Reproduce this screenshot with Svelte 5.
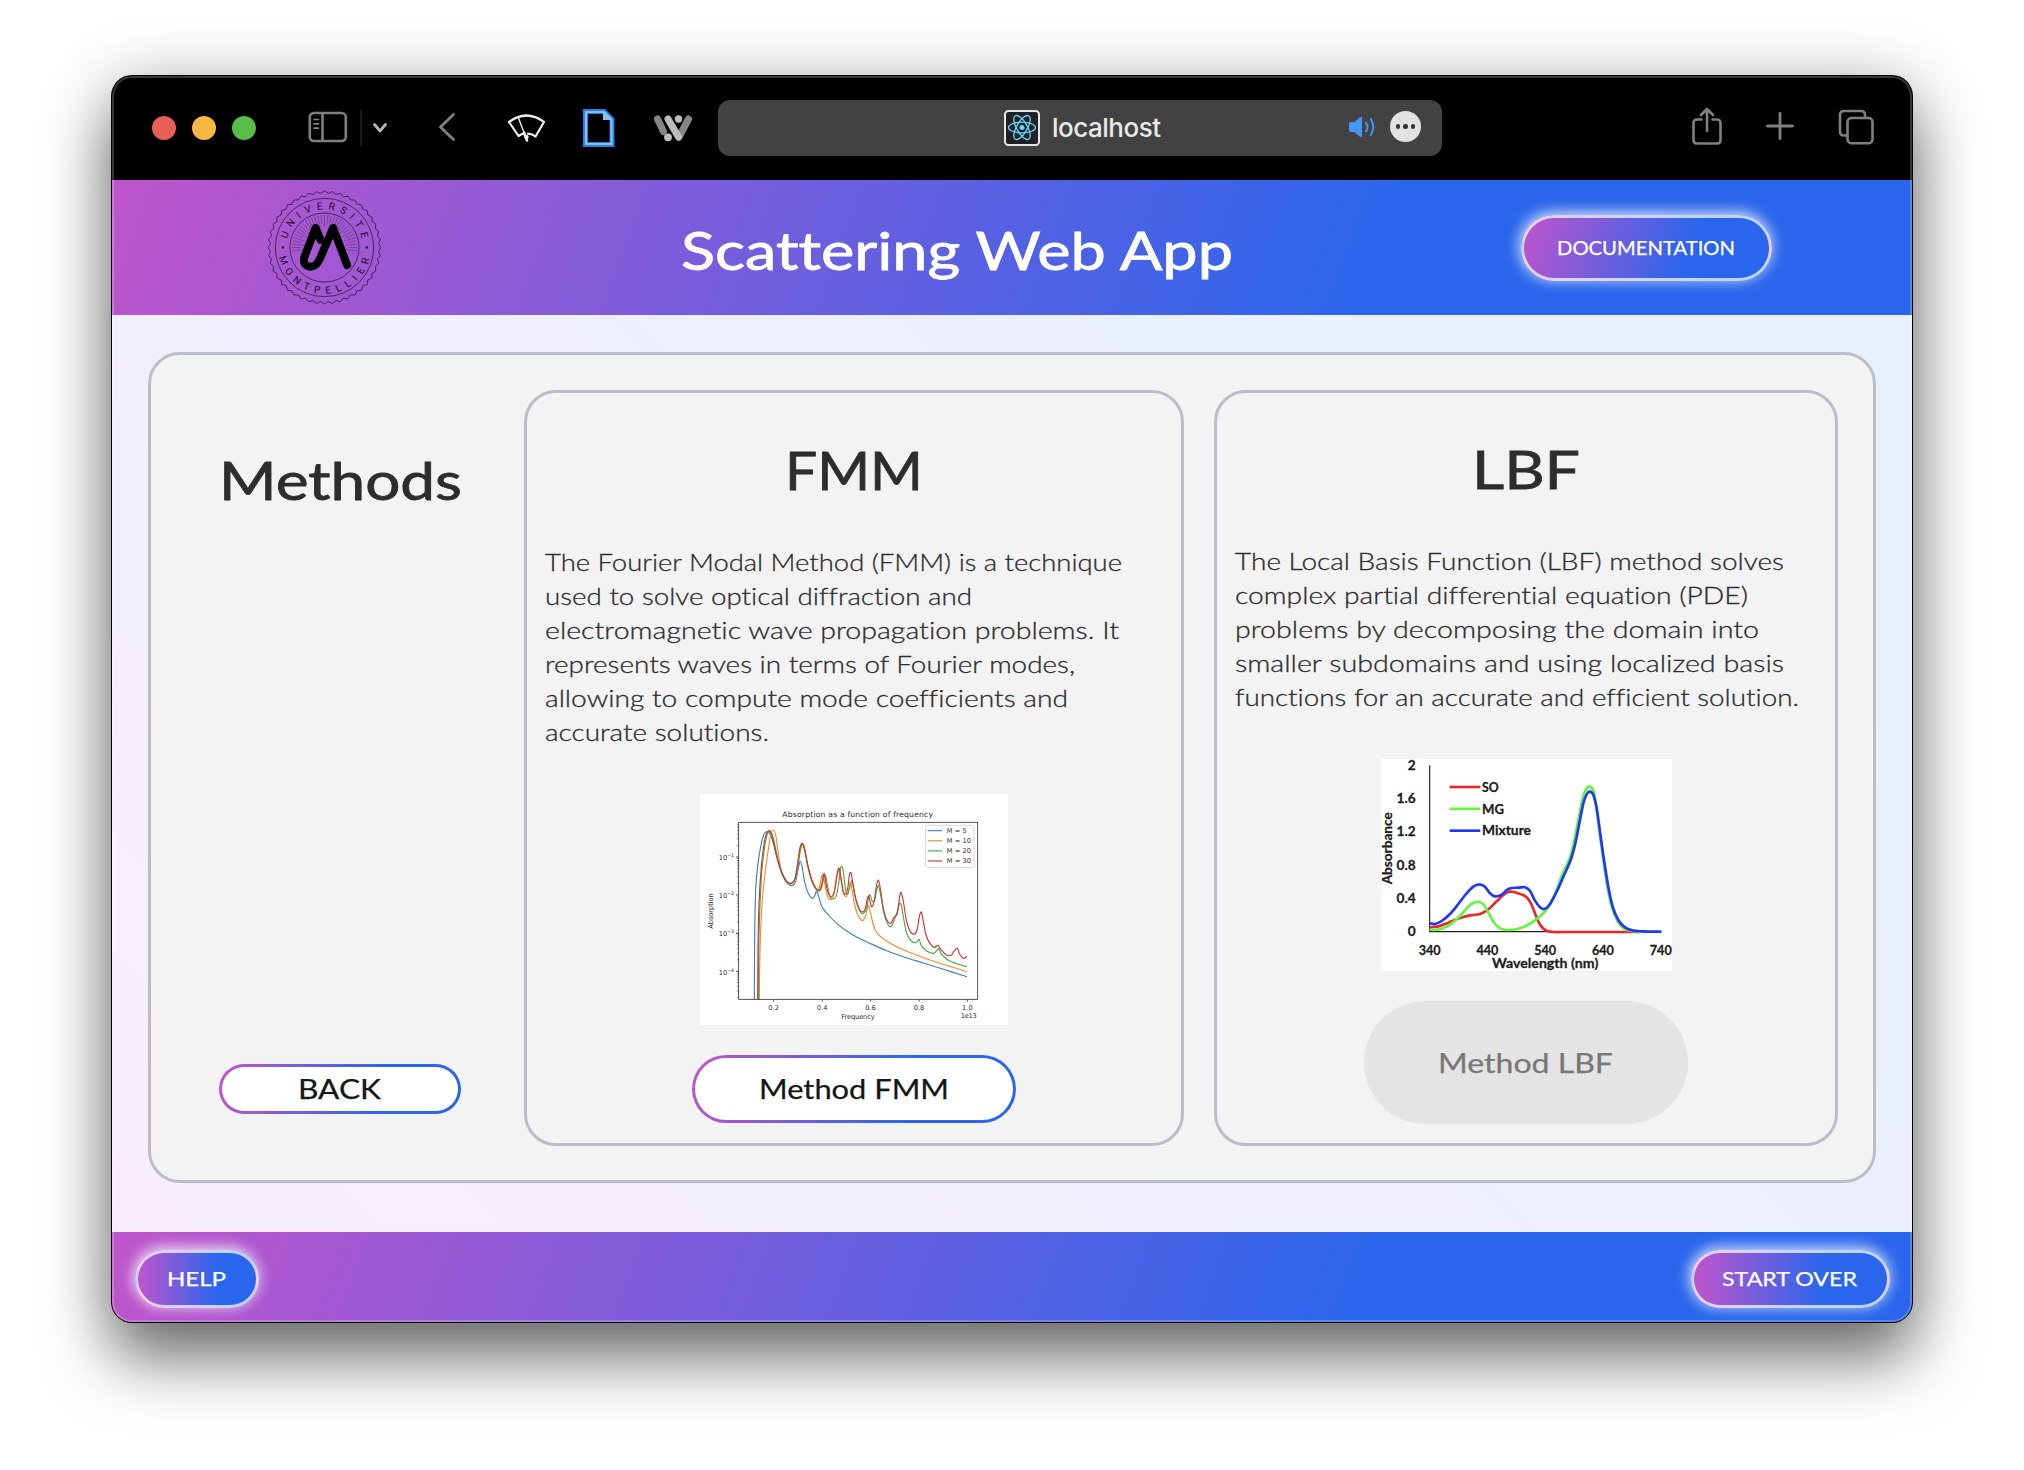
<script>
  // Catmull-Rom spline through a flat list of x,y pairs.
  function curve(points) {
    const p = points.trim().split(/\s+/).map((s) => s.split(',').map(Number));
    let d = `M${p[0]}`;
    for (let i = 0; i < p.length - 1; i++) {
      const a = p[i - 1] ?? p[i];
      const b = p[i];
      const c = p[i + 1];
      const e = p[i + 2] ?? c;
      d += `C${b[0] + (c[0] - a[0]) / 6},${b[1] + (c[1] - a[1]) / 6} ${c[0] - (e[0] - b[0]) / 6},${c[1] - (e[1] - b[1]) / 6} ${c}`;
    }
    return d;
  }

  const fmmText = [
    ['The Fourier Modal Method (FMM) is a technique', 577],
    ['used to solve optical diffraction and', 427],
    ['electromagnetic wave propagation problems. It', 574],
    ['represents waves in terms of Fourier modes,', 530],
    ['allowing to compute mode coefficients and', 523],
    ['accurate solutions.', 224],
  ];
  const lbfText = [
    ['The Local Basis Function (LBF) method solves', 549],
    ['complex partial differential equation (PDE)', 513],
    ['problems by decomposing the domain into', 524],
    ['smaller subdomains and using localized basis', 549],
    ['functions for an accurate and efficient solution.', 564],
  ];

  const absorption = [
    { name: 'M = 5', color: '#3f7fbc', d: curve('193,658 194,480 197,330 204,250 214,190 222,162 231,155 240,162 250,190 262,235 275,280 290,308 306,317 317,305 325,265 331,243 337,265 345,310 355,340 367,355 375,345 380,333 386,350 396,380 415,405 440,430 470,453 500,471 542,491 590,512 640,530 700,549 760,568 831,590') },
    { name: 'M = 10', color: '#f58a2c', d: curve('208,658 209,560 212,450 217,360 225,280 234,215 242,163 250,150 257,165 265,220 274,272 288,300 302,309 314,300 323,260 330,215 337,192 344,210 352,255 364,300 376,325 384,330 390,315 395,288 401,292 407,325 413,350 421,359 430,350 438,310 445,270 452,295 459,335 468,351 475,335 481,308 487,335 494,375 505,408 517,422 525,412 531,390 536,376 542,400 550,435 562,460 585,480 620,500 687,528 750,550 831,575') },
    { name: 'M = 20', color: '#4aa843', d: curve('206,658 206,520 209,400 215,280 224,200 232,162 241,153 250,175 262,230 275,275 290,303 303,311 316,296 325,250 332,205 339,192 346,215 354,260 367,305 385,333 395,322 402,292 407,288 413,320 420,350 428,357 438,350 446,310 451,270 455,259 460,275 466,325 473,343 480,320 486,302 492,335 502,375 512,397 520,400 530,385 535,355 540,344 547,364 554,360 559,335 565,317 572,345 582,400 593,432 602,440 611,425 620,400 627,375 633,372 640,410 650,460 664,483 678,488 687,478 694,497 710,513 730,520 740,512 746,506 755,523 775,541 800,551 831,560') },
    { name: 'M = 30', color: '#c93537', d: curve('203,658 204,500 207,370 214,260 223,185 230,160 238,153 247,170 260,230 274,275 288,303 302,311 315,295 324,240 330,203 337,190 344,210 354,258 367,303 384,331 394,318 400,285 404,284 409,318 416,342 424,350 433,335 440,290 446,264 452,285 459,330 467,343 474,320 478,285 483,278 488,305 497,355 508,388 517,396 525,388 531,360 536,348 541,368 546,380 553,362 559,320 565,300 571,325 580,385 591,421 602,430 612,412 622,400 629,350 634,338 641,370 650,425 661,455 673,462 682,447 688,410 694,396 700,425 708,465 720,490 733,502 744,496 753,509 768,524 784,526 793,512 802,505 809,523 818,534 824,534 831,529') },
  ];

  const absorbance = [
    { name: 'SO', color: '#e8282b', w: 50, d: curve('209,562 235,559 265,548 300,534 330,526 360,522 385,508 410,484 435,461 450,455 465,457 495,468 510,485 522,512 535,545 548,564 562,573 580,576 620,576 840,576') },
    { name: 'MG', color: '#62f53c', w: 66, d: curve('209,568 225,570 250,564 275,550 300,528 322,503 340,489 357,486 372,495 388,523 405,552 425,567 445,570 475,566 505,554 535,533 560,508 575,485 590,450 605,408 629,355 643,300 655,240 667,180 677,150 689,140 700,152 708,195 718,275 730,360 742,440 756,502 773,544 793,566 820,574 860,576') },
    { name: 'Mixture', color: '#2138f0', w: 147, d: curve('209,550 225,552 245,543 270,522 295,492 318,462 340,440 358,433 375,440 390,460 405,469 425,464 440,450 455,444 475,443 495,442 510,453 525,482 540,502 552,507 568,495 590,455 610,410 632,360 646,310 658,250 670,190 680,163 690,155 700,165 710,205 720,275 732,360 745,440 758,500 775,540 795,562 820,572 850,574 904,575') },
  ];

  // Minor ticks of the log axis: decades are 114.5 units apart.
  const minorTicks = [117, 231, 345, 460, 574, 688]
    .flatMap((y) => [2, 3, 4, 5, 6, 7, 8, 9].map((k) => y - Math.log10(k) * 114.5))
    .filter((y) => y > 128 && y < 658);

  const polar = (r, t) => [252 + r * Math.cos(t), 218 + r * Math.sin(t)].map((v) => v.toFixed(1));
  const seal = 'M' + Array.from({ length: 88 }, (_, i) => polar(i % 2 ? 163 : 170, (i * Math.PI) / 44)).join('L') + 'Z';
  const rays = Array.from({ length: 33 }, (_, i) => {
    const t = Math.PI * (1 + (i - 1) / 30);
    return `M${polar(i % 2 ? 72 : 62, t)}L${polar(98, t)}`;
  }).join('');
</script>

{#snippet label(text, width, cap, kind = '')}
  <svg class="label {kind}" {width} height={cap}>
    <text x="0" y={cap} font-size={cap / 0.717} textLength={width} lengthAdjust="spacingAndGlyphs">{text}</text>
  </svg>
{/snippet}

<div class="desktop">
  <div class="window">
    <div class="toolbar">
      <div class="lights"><i class="red"></i><i class="yellow"></i><i class="green"></i></div>

      <svg class="sidebar" width="40" height="32" viewBox="0 0 40 32">
        <g fill="none" stroke="#808080" stroke-width="2.6">
          <rect x="1.8" y="2" width="36" height="28" rx="4" /><path d="M14.5 2v28" />
          <path d="M6 8.5h4.5M6 12.8h4.5M6 17.2h4.5" stroke-width="1.7" stroke-linecap="round" />
        </g>
      </svg>
      <span class="divider"></span>
      <svg class="chevron" width="16" height="12" viewBox="0 0 16 12">
        <path d="M2.5 2.5 8 9l5.500-6.500" fill="none" stroke="#b4b4b4" stroke-width="2.800" stroke-linecap="round" stroke-linejoin="round" />
      </svg>
      <svg class="back" width="18" height="30" viewBox="0 0 18 30">
        <path d="M15.500 2.500 2.500 15l13 12.500" fill="none" stroke="#808080" stroke-width="2.800" stroke-linecap="round" stroke-linejoin="round" />
      </svg>
      <svg class="wiper" width="40" height="30" viewBox="0 0 40 30">
        <g fill="none" stroke="#f0f0f0" stroke-width="2.200" stroke-linejoin="round" stroke-linecap="round">
          <path d="M2 9Q19.500-4 37 9l-8.500 14.500q-3-2.500-7.500-2.800M2 9l9.500 14q2.500-1.800 5-2.300" />
          <path d="M11.500 5 19 25" stroke-width="1.400" /><path d="M17 19.500 20 27.500" stroke-width="2.600" />
        </g>
        <circle cx="19.500" cy="24" r="2.200" fill="#f0f0f0" />
      </svg>
      <svg class="doc" width="32" height="38" viewBox="0 0 32 38">
        <path d="M2.500 2.500h18.500l8 8V35.500H2.500Z" fill="none" stroke="#2b7de0" stroke-width="5" />
        <path d="M3 3h18l7.500 7.500V35H3Z" fill="none" stroke="#7fc4ff" stroke-width="2.200" />
        <path d="M20 3v8h9Z" fill="#7fc4ff" />
      </svg>
      <svg class="wlogo" width="40" height="28" viewBox="0 0 40 28">
        <g stroke-width="7" stroke-linecap="round">
          <path d="M4.500 5l6 12.500" stroke="#868686" /><path d="M35.500 5 26 23" stroke="#868686" />
          <path d="M15 5l10.500 18" stroke="#bdbdbd" />
        </g>
        <circle cx="15" cy="23.300" r="3.900" fill="#bdbdbd" /><circle cx="25.500" cy="5" r="3.700" fill="#bdbdbd" />
      </svg>

      <div class="address">
        <svg class="react" width="36" height="36" viewBox="0 0 36 36">
          <rect x="1" y="1" width="34" height="34" rx="3.500" fill="#202124" stroke="#e6e6e6" stroke-width="2" />
          <g fill="none" stroke="#61dafb" stroke-width="1.300">
            <ellipse cx="18" cy="17.500" rx="13.500" ry="5.300" />
            <ellipse cx="18" cy="17.500" rx="13.500" ry="5.300" transform="rotate(60 18 17.500)" />
            <ellipse cx="18" cy="17.500" rx="13.500" ry="5.300" transform="rotate(120 18 17.500)" />
          </g>
          <circle cx="18" cy="17.500" r="2.500" fill="#61dafb" />
        </svg>
        <span class="host">localhost</span>
        <svg class="speaker" width="28" height="22" viewBox="0 0 28 22">
          <path d="M1 8q0-2 2-2h3.500L12 1.200q2-1.200 2 .8v18q0 2-2 .8L6.500 16H3q-2 0-2-2Z" fill="#4596f7" />
          <path d="M18 6.500q3 4.500 0 9M22.800 3q5 8 0 16" fill="none" stroke="#4596f7" stroke-width="1.900" stroke-linecap="round" />
        </svg>
        <span class="more"><i></i><i></i><i></i></span>
      </div>

      <svg class="share" width="30" height="38" viewBox="0 0 30 38">
        <g fill="none" stroke="#808080" stroke-width="2.600" stroke-linecap="round" stroke-linejoin="round">
          <path d="M9.500 12.500H5q-3.500 0-3.500 3.500v17q0 3.500 3.500 3.500h20q3.500 0 3.500-3.500V16q0-3.500-3.500-3.500h-4.500" />
          <path d="M15 24V2M9 8l6-6 6 6" />
        </g>
      </svg>
      <svg class="plus" width="28" height="28" viewBox="0 0 28 28">
        <path d="M14 1.500v25M1.500 14h25" stroke="#808080" stroke-width="2.800" stroke-linecap="round" />
      </svg>
      <svg class="tabs" width="36" height="36" viewBox="0 0 36 36">
        <g fill="none" stroke="#808080" stroke-width="2.600">
          <rect x="9.500" y="9" width="25" height="25.200" rx="4" />
          <path d="M9.500 26.500H6q-4 0-4-4V6q0-4 4-4h17q4 0 4 4v3" />
        </g>
      </svg>
    </div>

    <header>
      <svg class="seal" width="117" height="117" viewBox="76 42 352 352">
        <g fill="none" stroke="#1d0a28" stroke-width="2">
          <path d={seal} /><circle cx="252" cy="218" r="148" /><circle cx="252" cy="218" r="104" />
          <path d={rays} stroke-width="1.500" opacity=".6" />
        </g>
        <path d="M320 271 278 159 237 254Q227 276 210 276 186 274 191 248L225 159 240 195" fill="none" stroke="#000" stroke-width="24" stroke-linecap="round" stroke-linejoin="round" />
        <circle cx="127" cy="218" r="3.500" /><circle cx="379" cy="218" r="3.500" />
        <path id="arc-top" d="M137 218A115 115 0 0 1 367 218" fill="none" />
        <path id="arc-bottom" d="M113 218A139 139 0 0 0 391 218" fill="none" />
        <g class="sealtext">
          <text letter-spacing="16"><textPath href="#arc-top" startOffset="52%">UNIVERSITE</textPath></text>
          <text letter-spacing="17.500"><textPath href="#arc-bottom" startOffset="51.500%">MONTPELLIER</textPath></text>
        </g>
      </svg>
      <h1>{@render label('Scattering Web App', 552, 38, 'strong')}</h1>
      <button class="glow docs">{@render label('DOCUMENTATION', 178, 13.7, 'strong')}</button>
    </header>

    <main>
      <section class="panel">
        <aside>
          <h2>{@render label('Methods', 243, 38, 'strong')}</h2>
          <button class="pill">{@render label('BACK', 83, 20, 'strong')}</button>
        </aside>

        <article class="fmm">
          <h2>{@render label('FMM', 138, 38, 'strong')}</h2>
          <p>{#each fmmText as [text, width]}{@render label(text, width, 17, 'body')}{/each}</p>
          <svg class="chart absorption" width="308" height="231" viewBox="30 42 924 693">
            <rect x="30" y="42" width="924" height="693" fill="#fff" />
            <text x="277" y="112" font-size="23" textLength="452">Absorption as a function of frequency</text>
            <g fill="none" stroke-width="3.400">
              {#each absorption as s}<path d={s.d} stroke={s.color} />{/each}
            </g>
            <g fill="none" stroke="#333" stroke-width="2.500">
              <rect x="146" y="127" width="717" height="531" />
              <path d="M251 658v7M397 658v7M542 658v7M687 658v7M832 658v7M146 231h-8M146 345h-8M146 460h-8M146 574h-8" />
              {#each minorTicks as y}<path d="M146 {y}h-5" stroke-width="1.800" />{/each}
            </g>
            {#each ['0.2', '0.4', '0.6', '0.8', '1.0'] as tick, i}
              <text x={251 + i * 145.3} y="689" font-size="20" text-anchor="middle">{tick}</text>
            {/each}
            {#each ['1', '2', '3', '4'] as power, i}
              <text x="86" y={240 + i * 114.5} font-size="20">10<tspan font-size="14" dy="-9">−{power}</tspan></text>
            {/each}
            <text x="454" y="716" font-size="20" textLength="100">Frequency</text>
            <text x="812" y="714" font-size="20" textLength="48">1e13</text>
            <text transform="translate(70 446) rotate(-90)" font-size="20" textLength="106">Absorption</text>
            <rect x="707" y="136" width="145" height="126" rx="4" fill="#fff" stroke="#d0d0d0" stroke-width="2.500" />
            {#each absorption as s, i}
              <path d="M713 {152 + i * 30.300}h43" stroke={s.color} stroke-width="3.400" />
              <text x="770" y={159 + i * 30.3} font-size="20" textLength={i ? 73 : 60}>{s.name}</text>
            {/each}
          </svg>
          <button class="pill method">{@render label('Method FMM', 190, 20, 'strong')}</button>
        </article>

        <article class="lbf">
          <h2>{@render label('LBF', 108, 38, 'strong')}</h2>
          <p>{#each lbfText as [text, width]}{@render label(text, width, 17, 'body')}{/each}</p>
          <svg class="chart absorbance" width="291" height="212" viewBox="63 57 873 636">
            <rect x="63" y="57" width="873" height="636" fill="#fff" />
            <path d="M209 76V575H904" fill="none" stroke="#222" stroke-width="3.500" />
            <g fill="none" stroke-width="8">
              {#each absorbance as s, i}
                <path d={s.d} stroke={s.color} />
                <path d="M269 {141 + i * 65.500}h92" stroke={s.color} />
              {/each}
            </g>
            {#each absorbance as s, i}
              <text x="366" y={155 + i * 65.5} textLength={s.w} lengthAdjust="spacingAndGlyphs">{s.name}</text>
            {/each}
            {#each ['2', '1.6', '1.2', '0.8', '0.4', '0'] as tick, i}
              <text x="167" y={90 + i * 99.6} text-anchor="end">{tick}</text>
            {/each}
            {#each ['340', '440', '540', '640', '740'] as tick, i}
              <text x={209 + i * 173.3} y="646" text-anchor="middle" textLength="66" lengthAdjust="spacingAndGlyphs">{tick}</text>
            {/each}
            <text x="396" y="684" textLength="319" lengthAdjust="spacingAndGlyphs">Wavelength (nm)</text>
            <text transform="translate(95 433) rotate(-90)" textLength="216" lengthAdjust="spacingAndGlyphs">Absorbance</text>
          </svg>
          <button class="pill disabled" disabled>{@render label('Method LBF', 175, 20, 'strong')}</button>
        </article>
      </section>
    </main>

    <footer>
      <button class="glow help">{@render label('HELP', 59, 13.7, 'strong')}</button>
      <button class="glow restart">{@render label('START OVER', 135, 13.7, 'strong')}</button>
    </footer>
  </div>
</div>

<style>
  :global(body) { background: #fff; }
  .desktop {
    box-sizing: border-box;
    width: 2024px;
    height: 1470px;
    padding: 76px 112px;
    overflow: hidden;
    font-family: Lato, 'Open Sans', sans-serif;
    --blend: #bf55cc, #2a66ec 67%;
  }
  .desktop * { box-sizing: border-box; }
  svg { display: block; flex: none; }
  h1, h2, p { margin: 0; font-weight: 400; }
  button { display: flex; align-items: center; justify-content: center; padding: 0; font: inherit; }

  .window {
    position: relative;
    display: flex;
    flex-direction: column;
    width: 1800px;
    height: 1246px;
    border-radius: 20px;
    overflow: hidden;
    background: #000;
    box-shadow: 0 0 0 1px #000, 0 38px 64px rgba(0, 0, 0, .5), 0 4px 66px rgba(0, 0, 0, .24);
  }
  .window::after {
    content: '';
    position: absolute;
    inset: 0;
    border-radius: inherit;
    box-shadow: inset 0 0 0 2px rgba(255, 255, 255, .22);
    pointer-events: none;
  }

  .toolbar { display: flex; align-items: center; height: 104px; padding-left: 40px; }
  .lights { display: flex; gap: 16px; }
  .lights i { width: 24px; height: 24px; border-radius: 50%; }
  .red { background: #ea5f55; }
  .yellow { background: #f4b843; }
  .green { background: #57be48; }
  .sidebar { margin-left: 52px; margin-bottom: 2px; }
  .divider { width: 2px; height: 36px; margin-left: 12px; background: #1a1a1a; }
  .chevron { margin-left: 10px; }
  .back { margin-left: 50px; margin-bottom: 2px; }
  .wiper { margin-left: 51px; }
  .doc { margin-left: 36px; }
  .wlogo { margin-left: 38px; }
  .address {
    display: flex;
    align-items: center;
    width: 724px;
    height: 56px;
    margin-left: 25px;
    padding-left: 286px;
    border-radius: 12px;
    background: #424242;
  }
  .host { width: 308px; padding-left: 12px; color: #e9e9e9; font: 500 26px/58px Inter, sans-serif; letter-spacing: -.5px; }
  .speaker { margin-bottom: 3px; }
  .more { display: flex; align-items: center; justify-content: center; gap: 3px; width: 31px; height: 31px; margin: 0 0 3px 14px; border-radius: 50%; background: #e2e2e2; }
  .more i { width: 4.500px; height: 4.500px; border-radius: 50%; background: #333; }
  .share { margin: 0 0 5px 250px; }
  .plus { margin: 0 0 4px 44px; }
  .tabs { margin: 0 0 3px 44px; }

  .label { overflow: visible; fill: currentColor; stroke: currentColor; stroke-width: 0; font-variant-ligatures: none; }
  .label.strong { stroke-width: .25px; }
  .label.body { font-weight: 300; stroke-width: .3px; }
  h1 .label.strong, h2 .label.strong { stroke-width: .8px; }

  header {
    display: flex;
    align-items: center;
    height: 135px;
    padding-left: 154px;
    background: linear-gradient(110deg, #bf55cc, #2a66ec 70%);
    color: #fff;
  }
  h1 { margin: 7px 288px 0 298px; }
  .sealtext { font: 400 30px Roboto, sans-serif; text-anchor: middle; fill: #1d0a28; }

  .glow {
    border: 3px solid rgba(255, 255, 255, .72);
    border-radius: 40px;
    background: linear-gradient(90deg, var(--blend));
    box-shadow: -1px -2px 14px 1px rgba(255, 255, 255, .8);
    color: #fff;
  }
  .docs { width: 251px; height: 66px; background: linear-gradient(110deg, var(--blend)); }
  .help { width: 124px; height: 58px; }
  .restart { width: 199px; height: 58px; }
  .glow .label { margin-right: 2px; }

  main {
    flex: 1;
    padding: 37px 36px 49px;
    background: linear-gradient(45deg, #f8eefb, #e8f0fe 85%);
  }
  .panel {
    display: grid;
    grid-template-columns: 373px 660px 624px;
    height: 100%;
    border: 3px solid #babec8;
    border-radius: 32px;
    background: #f3f3f3;
    color: #2d2d2d;
  }
  .lbf { margin-left: 30px; width: 624px; }
  aside {
    display: flex;
    flex-direction: column;
    align-items: center;
    justify-content: space-between;
    padding: 107px 0 66px 5px;
  }
  article {
    display: flex;
    flex-direction: column;
    align-items: center;
    margin: 35px 0 34px;
    border: 3px solid #babec8;
    border-radius: 32px;
  }
  .fmm { padding-top: 59px; }
  .lbf { padding-top: 58px; }
  article p { display: flex; flex-direction: column; align-self: stretch; gap: 17px; margin: 64px 0 53px 18px; }
  .chart { margin-bottom: 30px; overflow: visible; }
  .absorption { font-family: 'DejaVu Sans', sans-serif; fill: #2b2b2b; }
  .absorbance { font: 700 41px Lato, sans-serif; fill: #1c1c1c; stroke: #1c1c1c; stroke-width: 0; }
  .absorbance text { stroke-width: .8; }

  .pill {
    width: 242px;
    height: 50px;
    border: 3px solid transparent;
    border-radius: 62px;
    background: linear-gradient(#fff, #fff) padding-box, linear-gradient(100deg, var(--blend)) border-box;
    color: #141618;
  }
  .pill .label { margin-right: 1px; }
  .method { width: 324px; height: 68px; }
  .disabled { width: 324px; height: 123px; border: 0; background: #e4e4e4; color: #777; }

  footer {
    display: flex;
    justify-content: space-between;
    height: 90px;
    padding: 18px 22px 0 23px;
    background: linear-gradient(110deg, #bf55cc, #2a66ec 70%);
  }
</style>
